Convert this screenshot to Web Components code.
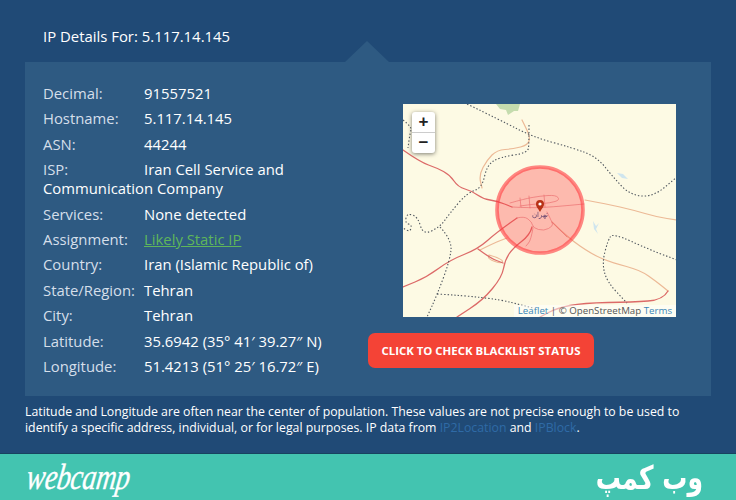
<!DOCTYPE html>
<html>
<head>
<meta charset="utf-8">
<style>
  html, body { margin: 0; height: 500px; overflow: hidden; background: #204a76; }
  body { font-family: "Open Sans", "Liberation Sans", sans-serif; color: #fff; }
</style>
</head>
<body>
<ip-page>
  <span slot="title">IP Details For: 5.117.14.145</span>
  <ip-row label="Decimal:">91557521</ip-row>
  <ip-row label="Hostname:">5.117.14.145</ip-row>
  <ip-row label="ASN:">44244</ip-row>
  <ip-row label="ISP:">Iran Cell Service and Communication Company</ip-row>
  <ip-row label="Services:">None detected</ip-row>
  <ip-row label="Assignment:"><a href="#" style="color:#5fb65a">Likely Static IP</a></ip-row>
  <ip-row label="Country:">Iran (Islamic Republic of)</ip-row>
  <ip-row label="State/Region:">Tehran</ip-row>
  <ip-row label="City:">Tehran</ip-row>
  <ip-row label="Latitude:">35.6942 (35° 41′ 39.27″ N)</ip-row>
  <ip-row label="Longitude:">51.4213 (51° 25′ 16.72″ E)</ip-row>
  <ip-map slot="side"></ip-map>
  <check-button slot="side">Click to check blacklist status</check-button>
  <span slot="note">Latitude and Longitude are often near the center of population. These values are not precise enough to be used to identify a specific address, individual, or for legal purposes. IP data from <a href="#" style="color:#2f6aa6;text-decoration:none">IP2Location</a> and <a href="#" style="color:#2f6aa6;text-decoration:none">IPBlock</a>.</span>
</ip-page>
<brand-footer></brand-footer>

<script>
// rounds a list of x,y points off into a path, so the roads don't look like polylines
function road(pts) {
  let d = `M${pts[0]} ${pts[1]}`;
  for (let i = 2; i < pts.length - 2; i += 2) {
    d += `Q${pts[i]} ${pts[i + 1]} ${(pts[i] + pts[i + 2]) / 2} ${(pts[i + 1] + pts[i + 3]) / 2}`;
  }
  return d + `L${pts[pts.length - 2]} ${pts[pts.length - 1]}`;
}
const paths = (list) => list.map((p) => `<path d="${road(p)}"/>`).join("");

const ORANGE = [
  [522,120, 526,128, 530,137, 528,145, 513,149, 497,150, 487,160, 479,175, 482,188],
  [480,250, 494,243, 507,238],
  [489,255, 503,259, 502,264, 488,259, 489,255],
  [585,200, 607,204, 633,210, 657,217, 677,220],
  [552,222, 567,237, 593,255, 613,263, 640,270, 657,282, 668,291],
];
const RED = [
  [403,150, 420,162, 437,168, 450,175, 458,187, 472,191, 483,199, 497,201, 512,207],
  [517,218, 497,232, 478,249, 450,260, 427,277, 403,287],
  [532,227, 530,235, 513,248, 505,260, 502,277, 483,300, 457,317],
  [478,249, 490,258, 503,263],
  [668,291, 663,300, 633,302, 583,303, 557,308, 540,317],
];
const DOTS = [
  [467,104, 500,120, 533,137, 573,148, 597,157, 613,177, 630,195, 653,197, 677,177],
  [529,125, 529,143, 528,153, 500,157, 487,165, 482,188, 467,193, 450,213, 440,227, 423,235, 418,217, 407,213, 405,223, 412,225, 410,232, 403,228],
  [440,227, 452,240, 450,260, 437,295, 427,317],
  [437,294, 490,297, 533,308],
  [677,260, 650,250, 613,233, 608,240, 602,263, 607,282, 627,303],
  [403,120, 412,127, 410,133, 408,148],
];
const CITY = [
  [510,203, 524,199, 540,196, 556,195, 560,200, 550,203, 535,204, 520,206],
  [512,207, 530,208, 552,207, 584,204],
  [520,198, 521,207], [529,196, 530,208], [544,195, 545,207],
  [517,218, 524,216, 532,222, 533,228, 544,231, 553,226, 552,222, 547,212],
  [533,228, 531,240, 526,246], [552,222, 567,237],
];

class IpPage extends HTMLElement {
  connectedCallback() {
    this.attachShadow({ mode: "open" }).innerHTML = `
    <style>
      :host { display: block; height: 453px; box-sizing: border-box; padding: 0 25px; }
      .title { height: 62px; box-sizing: border-box; padding: 26px 0 0 18px; font-size: 14.9px; line-height: 20px; }
      .panel { position: relative; height: 334px; background: #2e5a82; display: flex; box-sizing: border-box; padding: 22px 0 0 18px; }
      .panel::before { content: ""; position: absolute; left: 320px; top: -21px; border: solid transparent; border-width: 0 22px 21px; border-bottom-color: #2e5a82; }
      .rows { width: 308px; flex: none; }
      .side { margin-left: 17px; padding-top: 20px; display: flex; flex-direction: column; align-items: flex-start; }
      .note { padding-top: 8px; font-size: 12.3px; line-height: 16px; }
    </style>
    <div class="title"><slot name="title"></slot></div>
    <div class="panel">
      <div class="rows"><slot></slot></div>
      <div class="side"><slot name="side"></slot></div>
    </div>
    <div class="note"><slot name="note"></slot></div>`;
  }
}
class IpRow extends HTMLElement {
  connectedCallback() {
    this.attachShadow({ mode: "open" }).innerHTML = `
    <style>
      :host { display: block; font-size: 14.85px; line-height: 19px; margin-bottom: 6.4px; }
      .label { display: inline-block; width: 101px; color: #d5dfea; }
    </style>
    <span class="label">${this.getAttribute("label")}</span><slot></slot>`;
  }
}
class IpMap extends HTMLElement {
  connectedCallback() {
    this.attachShadow({ mode: "open" }).innerHTML = `
    <style>
      :host { display: block; position: relative; width: 273px; height: 213px; margin-left: 35px; background: #fdfae4; overflow: hidden; }
      svg { display: block; filter: blur(.4px); }
      .zoom { position: absolute; left: 9px; top: 8px; width: 23px; background: #fff; border-radius: 3px; box-shadow: 0 1px 4px rgba(0,0,0,.5); font: bold 17px/20px "Liberation Sans", sans-serif; color: #222; text-align: center; }
      .zoom div { height: 20px; }
      .zoom div + div { border-top: 1px solid #ccc; }
      .attr { position: absolute; right: 0; bottom: 0; padding: 0 4px; font-size: 9.7px; line-height: 12px; color: #555; background: rgba(255,255,255,.5); white-space: nowrap; }
      .attr a { color: #3b87b8; text-decoration: none; }
      .city { font: 7px "DejaVu Sans", sans-serif; fill: #5b3d6b; }
    </style>
    <svg width="273" height="213" viewBox="403 104 273 213" fill="none" stroke-linejoin="round" stroke-linecap="round">
      <path d="M496 104l4 5 6 1 2 5 6-4 4 0 2-7z" fill="#c5dcae"/>
      <path d="M617 173l6 1 5 5-6-1zM593 221l3 5 3-3-3 6 2 5-4-5z" fill="#cfe5ee"/>
      <g stroke="#ecb996" stroke-width="1.2">${paths(ORANGE)}</g>
      <g stroke="#dc6a68" stroke-width="1.3">${paths(RED)}</g>
      <g stroke="#4f565e" stroke-width="1.1" stroke-dasharray="1.4 2" stroke-linecap="butt">${paths(DOTS)}</g>
      <g stroke="#e08a8a" stroke-width=".7">${paths(CITY)}</g>
      <circle cx="540" cy="210" r="43" fill="#ff3b3f" fill-opacity=".33" stroke="#ff3b3f" stroke-opacity=".6" stroke-width="3.6"/>
      <text class="city" x="540" y="217" text-anchor="middle" stroke="none">تهران</text>
      <path d="M540 212c-2-4-4-5-4-8a4 4 0 0 1 8 0c0 3-2 4-4 8z" fill="#b83216"/>
      <circle cx="540" cy="204" r="1.6" fill="#fff"/>
    </svg>
    <div class="zoom"><div>+</div><div>−</div></div>
    <div class="attr"><a href="#">Leaflet</a> | © OpenStreetMap <a href="#">Terms</a></div>`;
  }
}
class CheckButton extends HTMLElement {
  connectedCallback() {
    this.attachShadow({ mode: "open" }).innerHTML = `
    <style>
      :host { display: block; margin-top: 16px; }
      a { display: block; width: 226px; height: 35px; box-sizing: border-box; border-radius: 7px; background: #f44336; color: #fff; font-size: 11.4px; font-weight: 700; line-height: 35px; text-align: center; text-transform: uppercase; text-decoration: none; white-space: nowrap; }
    </style>
    <a href="#"><slot></slot></a>`;
  }
}
class BrandFooter extends HTMLElement {
  connectedCallback() {
    this.attachShadow({ mode: "open" }).innerHTML = `
    <style>
      :host { display: flex; justify-content: space-between; align-items: center; height: 46px; padding: 0 33px 0 27px; background: #43c4b0; border-top: 1px solid #17435f; color: #fff; }
      .en { font: italic 400 28px "Liberation Serif", serif; letter-spacing: -.4px; display: inline-block; -webkit-text-stroke: .3px #fff; transform: skewX(-8deg) scaleY(1.3); }
      .fa { font: 700 25px "DejaVu Sans", sans-serif; display: inline-block; transform: scaleY(1.3); }
    </style>
    <span class="en">webcamp</span>
    <span class="fa" dir="rtl">وب کمپ</span>`;
  }
}
customElements.define("ip-page", IpPage);
customElements.define("ip-row", IpRow);
customElements.define("ip-map", IpMap);
customElements.define("check-button", CheckButton);
customElements.define("brand-footer", BrandFooter);
</script>
</body>
</html>
